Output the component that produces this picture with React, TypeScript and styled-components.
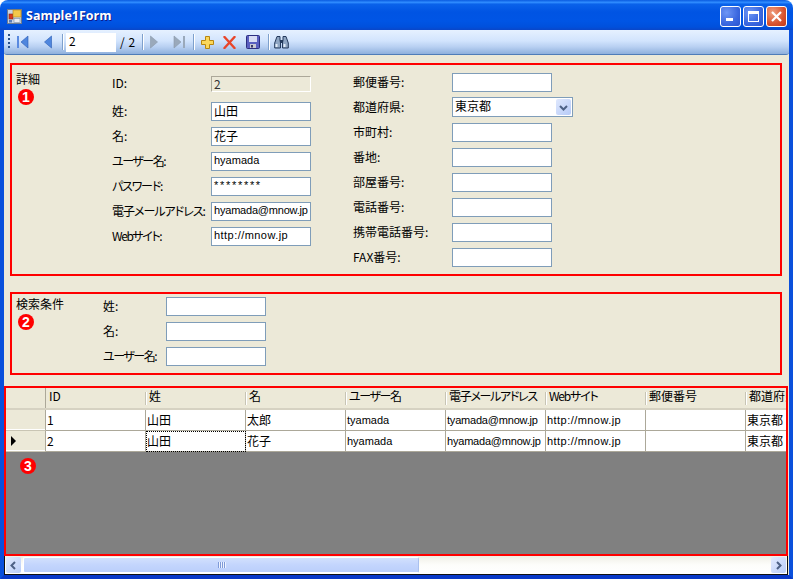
import React from 'react';
import styled, { createGlobalStyle, css } from 'styled-components';

const Global = createGlobalStyle`
  html, body { margin: 0; padding: 0; background: #fff; }
  #root { width: 793px; height: 579px; overflow: hidden; }
`;

const uiFont = `"Noto Sans CJK JP", "Liberation Sans", sans-serif`;

const latinText = css<{ $latin?: boolean; $track?: number }>`
  ${p => p.$latin ? `font-family: "Liberation Sans", sans-serif; font-size: 11px;` : ''}
  ${p => p.$track ? `letter-spacing: ${p.$track}px;` : ''}
`;

const Win = styled.div`
  width: 793px; height: 579px; display: flex; flex-direction: column;
  font-family: ${uiFont}; font-size: 12px; line-height: 14px; color: #000;
  font-feature-settings: "palt";
`;
const TitleBar = styled.div`
  height: 30px; flex: none; display: flex; align-items: center; padding: 2px 6px 0 7px;
  border-radius: 8px 8px 0 0; box-sizing: border-box;
  background: linear-gradient(180deg, #0a5be0 0%, #2f8cff 8%, #0a62ea 14%, #0054e3 40%, #0055e5 70%, #0050dc 90%, #0a46c8 100%);
`;
const TitleText = styled.div`
  font-family: "Open Sans", "Liberation Sans", sans-serif; font-weight: 700; font-size: 12.5px; color: #fff;
  text-shadow: 1px 1px 0 #0f1a89; flex: 1; margin-left: 4px;
`;
const CapBtn = styled.div<{ $close?: boolean }>`
  width: 21px; height: 21px; box-sizing: border-box; border: 1px solid #fff; border-radius: 3px;
  display: flex; align-items: center; justify-content: center; margin-left: 2px;
  background: ${p => p.$close
    ? 'radial-gradient(circle at 30% 30%, #f0a080, #d8532f 60%, #c23a18)'
    : 'radial-gradient(circle at 30% 30%, #6d96f5, #3a67df 60%, #2a54d0)'};
`;
const Frame = styled.div`
  flex: 1; min-height: 0; display: flex; box-sizing: border-box;
  border-left: 4px solid #0a50dc; border-right: 4px solid #0a50dc; border-bottom: 4px solid #0838c8;
`;
const Client = styled.div`
  flex: 1; min-width: 0; display: flex; flex-direction: column; background: #ece9d8;
`;
const Toolbar = styled.div`
  height: 25px; flex: none; box-sizing: border-box; display: flex; align-items: center;
  border-radius: 0 0 3px 3px; border-bottom: 1px solid #4f7cb8;
  background: linear-gradient(180deg, #e6f1ff 0%, #d2e4fd 45%, #b8d0f2 70%, #8fb0dc 100%);
`;
const Grip = styled.div`
  width: 2px; height: 16px; margin: 0 0 0 4px;
  background: repeating-linear-gradient(180deg, #27508c 0 2px, transparent 2px 4px);
`;
const Sep = styled.div<{ $l: number; $r: number }>`
  width: 1px; height: 16px; background: #7ea0cc; box-shadow: 1px 0 0 #fff;
  margin-left: ${p => p.$l}px; margin-right: ${p => p.$r}px;
`;
const IconSlot = styled.svg<{ $l: number }>`
  flex: none; margin-left: ${p => p.$l}px; display: block;
`;
const PageBox = styled.div`
  width: 50px; height: 19px; background: #fff; box-sizing: border-box; padding: 1px 0 0 3px; flex: none;
`;
const PageCount = styled.div`
  margin-left: 4px; width: 18px; white-space: nowrap; flex: none; letter-spacing: 0.5px;
`;
const Group = styled.section<{ $h: number; $mt: number }>`
  box-sizing: border-box; height: ${p => p.$h}px; margin: ${p => p.$mt}px 7px 0 6px;
  border: 2px solid #f00; display: flex; flex: none;
`;
const Heading = styled.div<{ $w: number; $pt: number }>`
  width: ${p => p.$w}px; box-sizing: border-box; padding: ${p => p.$pt}px 0 0 4px; flex: none;
  display: flex; flex-direction: column; align-items: flex-start; gap: 3px;
`;
const Badge = styled.div<{ $floating?: boolean }>`
  width: 16px; height: 16px; border-radius: 50%; background: #f00; color: #fff; margin-left: 2px;
  font-family: "Liberation Sans", sans-serif; font-weight: 700; font-size: 14px; line-height: 16px; text-align: center;
  ${p => p.$floating ? 'position: absolute; left: 12px; top: 70px;' : ''}
`;
const Fields = styled.div<{ $label: number; $pt: number; $ml?: number }>`
  display: grid; grid-template-columns: ${p => p.$label}px 100px; grid-auto-rows: min-content;
  row-gap: 6px; padding-top: ${p => p.$pt}px; margin-left: ${p => p.$ml ?? 0}px; align-items: center;
`;
const Label = styled.div<{ $up?: number; $track?: number }>`
  white-space: nowrap; height: 14px; margin-top: -${p => p.$up ?? 2}px;
  ${p => p.$track ? `letter-spacing: ${p.$track}px;` : ''}
`;
const Field = styled.div<{ $readonly?: boolean; $latin?: boolean; $track?: number }>`
  box-sizing: border-box; width: 100px; height: ${p => p.$readonly ? 16 : 19}px; padding: 0 0 0 2px;
  white-space: nowrap; background: ${p => p.$readonly ? '#ece9d8' : '#fff'};
  border: 1px solid #7f9db9; line-height: 15px;
  ${latinText}
  ${p => p.$readonly ? `
    border-color: #aca899 #fff #fff #aca899; color: #333; margin-bottom: 4px; line-height: 13px;
  ` : ''}
`;
const Combo = styled.div`
  box-sizing: border-box; width: 121px; height: 20px; margin-top: -1px; border: 1px solid #7f9db9; background: #fff;
  display: flex; align-items: center; justify-content: space-between; padding: 0 1px 0 2px;
`;
const ComboText = styled.span`
  margin-top: -3px;
`;
const ComboBtn = styled.div`
  width: 15px; height: 16px; border-radius: 2px; display: flex; align-items: center; justify-content: center;
  background: linear-gradient(135deg, #dfe8fd, #b6caf7);
`;
const GridWrap = styled.div`
  position: relative; box-sizing: border-box; height: 170px; margin: 11px 1px 0 0; flex: none;
  border: 2px solid #f00; background: #808080; overflow: hidden;
`;
const GridRow = styled.div<{ $header?: boolean }>`
  display: flex; height: ${p => p.$header ? 22 : 21}px; box-sizing: border-box;
  ${p => p.$header ? 'background: #ece9d8; border-bottom: 2px solid #d6d2c2;' : ''}
`;
const RowHead = styled.div<{ $header?: boolean }>`
  width: 40px; flex: none; box-sizing: border-box; background: #ece9d8; display: flex; align-items: center; padding-left: 5px;
  border-right: 1px solid #aca899;
  ${p => p.$header ? '' : 'position: relative; box-shadow: inset 0 -2px 0 -1px #fff; border-bottom: 1px solid #c9c5b4;'}
`;
const HeadCell = styled.div<{ $track?: number }>`
  width: 100px; flex: none; box-sizing: border-box; padding: 1px 0 0 3px; white-space: nowrap; position: relative;
  ${p => p.$track ? `letter-spacing: ${p.$track}px;` : ''}
  &::after { content: ''; position: absolute; right: 0; top: 4px; height: 13px; width: 1px; background: #c7c4b4; box-shadow: 1px 0 0 #fff; }
`;
const Cell = styled.div<{ $focus?: boolean; $latin?: boolean; $track?: number }>`
  width: 100px; flex: none; box-sizing: border-box; background: #fff; white-space: nowrap;
  border-right: 1px solid #aca899; border-bottom: 1px solid #aca899; padding: 3px 0 0 1px; overflow: hidden;
  ${latinText}
  ${p => p.$focus ? 'outline: 1px dotted #000; outline-offset: -1px;' : ''}
`;
const Scroller = styled.div`
  height: 19px; flex: none; box-sizing: border-box; margin-right: 1px; display: flex; align-items: stretch;
  border-left: 1px solid #111; border-bottom: 1px solid #111; border-right: 1px solid #111; padding: 1px;
  background: linear-gradient(180deg, #f0efe6 0%, #fdfdfb 50%, #fff 100%);
`;
const ScrollBtn = styled.div`
  width: 15px; flex: none; border-radius: 2px; display: flex; align-items: center; justify-content: center;
  background: linear-gradient(135deg, #e3ebfe, #b9cdf8);
`;
const Thumb = styled.div`
  width: 396px; margin-left: 2px; flex: none; display: flex; align-items: center; justify-content: center; gap: 1px;
  box-sizing: border-box; border: 1px solid #fff; border-right-color: #a9c0ee; border-radius: 2px;
  background: linear-gradient(180deg, #d2e0fd, #c3d5fd 50%, #bbcffb);
`;
const Notch = styled.div`
  width: 1px; height: 6px; background: #7e9ad8; box-shadow: 1px 0 0 #eef3ff;
`;
const Track = styled.div`flex: 1;`;

const NavFirst = ({ l }: { l: number }) => (
  <IconSlot $l={l} width="12" height="14" viewBox="0 0 12 14">
    <rect x="0" y="1" width="2" height="12" fill="#5a8ae0" />
    <path d="M11 1 L4 7 L11 13 Z" fill="#4f86de" stroke="#2a5cb4" strokeWidth="0.6" />
  </IconSlot>
);
const NavPrev = ({ l }: { l: number }) => (
  <IconSlot $l={l} width="8" height="14" viewBox="0 0 8 14">
    <path d="M7.5 1 L0.5 7 L7.5 13 Z" fill="#4f86de" stroke="#2a5cb4" strokeWidth="0.6" />
  </IconSlot>
);
const NavNext = ({ l }: { l: number }) => (
  <IconSlot $l={l} width="8" height="14" viewBox="0 0 8 14">
    <path d="M0.5 1 L7.5 7 L0.5 13 Z" fill="#9aa9bb" stroke="#8a98aa" strokeWidth="0.6" />
  </IconSlot>
);
const NavLast = ({ l }: { l: number }) => (
  <IconSlot $l={l} width="12" height="14" viewBox="0 0 12 14">
    <path d="M1 1 L8 7 L1 13 Z" fill="#9aa9bb" stroke="#8a98aa" strokeWidth="0.6" />
    <rect x="10" y="1" width="2" height="12" fill="#9aa9bb" />
  </IconSlot>
);
const PlusIcon = ({ l }: { l: number }) => (
  <IconSlot $l={l} width="13" height="13" viewBox="0 0 13 13">
    <path d="M4.5 0.5 H8.5 V4.5 H12.5 V8.5 H8.5 V12.5 H4.5 V8.5 H0.5 V4.5 H4.5 Z" fill="#fbd75a" stroke="#b8860f" />
  </IconSlot>
);
const CrossIcon = ({ l }: { l: number }) => (
  <IconSlot $l={l} width="13" height="13" viewBox="0 0 13 13">
    <path d="M1.5 1 L11.5 12 M11.5 1 L1.5 12" stroke="#e8452a" strokeWidth="2.4" strokeLinecap="round" />
  </IconSlot>
);
const SaveIcon = ({ l }: { l: number }) => (
  <IconSlot $l={l} width="14" height="14" viewBox="0 0 14 14">
    <rect x="0.5" y="0.5" width="13" height="13" rx="1" fill="#5a5fc0" stroke="#2c2e80" />
    <rect x="3" y="1" width="8" height="6" fill="#d8dcf4" />
    <rect x="4" y="9" width="6" height="4" fill="#c8c8d4" />
    <rect x="5" y="10" width="2" height="2.5" fill="#3a3a6a" />
  </IconSlot>
);
const BinoIcon = ({ l }: { l: number }) => (
  <IconSlot $l={l} width="15" height="14" viewBox="0 0 15 14">
    <path d="M3 1.5 H6 V5 L6.5 8 V13 H0.7 V8 Z" fill="#8fa6c4" stroke="#243a5c" strokeWidth="1" />
    <path d="M9 1.5 H12 L14.3 8 V13 H8.5 V8 L9 5 Z" fill="#8fa6c4" stroke="#243a5c" strokeWidth="1" />
    <rect x="6" y="5" width="3" height="3" fill="#243a5c" />
    <rect x="1.5" y="9" width="2" height="3" fill="#e4edf8" />
    <rect x="9.5" y="9" width="2" height="3" fill="#e4edf8" />
  </IconSlot>
);
const AppIcon = () => (
  <svg width="15" height="15" viewBox="0 0 15 15" style={{ flex: 'none' }}>
    <rect x="0.5" y="0.5" width="14" height="14" fill="#c8d4e4" stroke="#6c7a90" />
    <rect x="2" y="5" width="4" height="5" fill="#d83a20" stroke="#8c2010" strokeWidth="0.6" />
    <rect x="6" y="1" width="8" height="7" fill="#f4c84a" stroke="#b08420" strokeWidth="0.6" />
    <rect x="2" y="11" width="3" height="2.5" fill="#5a7cb8" />
    <rect x="7" y="9.5" width="6" height="4" fill="#e8ecf4" stroke="#7c8ca4" strokeWidth="0.6" />
  </svg>
);
const Chevron = ({ dir }: { dir: 'left' | 'right' | 'down' }) => {
  const d = dir === 'left' ? 'M6 1 L2.5 4.5 L6 8' : dir === 'right' ? 'M3 1 L6.5 4.5 L3 8' : 'M1 3 L4.5 6.5 L8 3';
  return (
    <svg width="9" height="9" viewBox="0 0 9 9">
      <path d={d} fill="none" stroke="#4d6185" strokeWidth="2" />
    </svg>
  );
};
const Triangle = () => (
  <svg width="5" height="10" viewBox="0 0 5 10"><path d="M0 0 L5 5 L0 10 Z" fill="#000" /></svg>
);

type LeftField = { label: string; value: string; labelTrack?: number; latin?: boolean; track?: number };
const leftFields: LeftField[] = [
  { label: '姓:', value: '山田' },
  { label: '名:', value: '花子' },
  { label: 'ユーザー名:', value: 'hyamada', labelTrack: -1.5, latin: true },
  { label: 'パスワード:', value: '********', labelTrack: -1.2, latin: true, track: 1.7 },
  { label: '電子メールアドレス:', value: 'hyamada@mnow.jp', labelTrack: -1, latin: true, track: -0.2 },
  { label: 'Webサイト:', value: 'http://mnow.jp', labelTrack: -1.4, latin: true, track: 0.45 },
];
const rightAfterCombo = ['市町村:', '番地:', '部屋番号:', '電話番号:', '携帯電話番号:', 'FAX番号:'];
const columns: { name: string; track?: number }[] = [
  { name: 'ID' }, { name: '姓' }, { name: '名' }, { name: 'ユーザー名', track: -1.4 },
  { name: '電子メールアドレス', track: -1.3 }, { name: 'Webサイト', track: -1.2 },
  { name: '郵便番号' }, { name: '都道府県' },
];
const rows = [
  ['1', '山田', '太郎', 'tyamada', 'tyamada@mnow.jp', 'http://mnow.jp', '', '東京都'],
  ['2', '山田', '花子', 'hyamada', 'hyamada@mnow.jp', 'http://mnow.jp', '', '東京都'],
];
const cellTrack = (v: string) => (v.startsWith('http') ? 0.45 : v.includes('@') ? -0.2 : 0);
const isLatinCell = (v: string) => /^[a-z]/.test(v);

export default function App() {
  return (
    <Win>
      <Global />
      <TitleBar>
        <AppIcon />
        <TitleText>Sample1Form</TitleText>
        <CapBtn>
          <svg width="11" height="11" viewBox="0 0 11 11"><rect x="1" y="7" width="7" height="3" fill="#fff" /></svg>
        </CapBtn>
        <CapBtn>
          <svg width="13" height="13" viewBox="0 0 13 13"><rect x="1.5" y="1.5" width="10" height="10" fill="none" stroke="#fff" /><rect x="1" y="1" width="11" height="3" fill="#fff" /></svg>
        </CapBtn>
        <CapBtn $close>
          <svg width="13" height="13" viewBox="0 0 13 13"><path d="M2 2 L11 11 M11 2 L2 11" stroke="#fff" strokeWidth="2.2" /></svg>
        </CapBtn>
      </TitleBar>
      <Frame>
        <Client>
          <Toolbar>
            <Grip />
            <NavFirst l={7} />
            <NavPrev l={15} />
            <Sep $l={10} $r={3} />
            <PageBox>2</PageBox>
            <PageCount>/ 2</PageCount>
            <Sep $l={4} $r={0} />
            <NavNext l={7} />
            <NavLast l={15} />
            <Sep $l={8} $r={0} />
            <PlusIcon l={7} />
            <CrossIcon l={9} />
            <SaveIcon l={10} />
            <Sep $l={8} $r={0} />
            <BinoIcon l={5} />
          </Toolbar>
          <Group $h={213} $mt={8}>
            <Heading $w={100} $pt={7}>
              詳細
              <Badge>1</Badge>
            </Heading>
            <Fields $label={99} $pt={11}>
              <Label $up={6}>ID:</Label>
              <Field $readonly>2</Field>
              {leftFields.map(f => (
                <React.Fragment key={f.label}>
                  <Label $track={f.labelTrack}>{f.label}</Label>
                  <Field $latin={f.latin} $track={f.track}>{f.value}</Field>
                </React.Fragment>
              ))}
            </Fields>
            <Fields $label={99} $pt={8} $ml={42}>
              <Label>郵便番号:</Label>
              <Field />
              <Label>都道府県:</Label>
              <Combo>
                <ComboText>東京都</ComboText>
                <ComboBtn><Chevron dir="down" /></ComboBtn>
              </Combo>
              {rightAfterCombo.map(l => (
                <React.Fragment key={l}>
                  <Label>{l}</Label>
                  <Field />
                </React.Fragment>
              ))}
            </Fields>
          </Group>
          <Group $h={83} $mt={16}>
            <Heading $w={91} $pt={3}>
              検索条件
              <Badge>2</Badge>
            </Heading>
            <Fields $label={63} $pt={3}>
              <Label>姓:</Label><Field />
              <Label>名:</Label><Field />
              <Label $track={-1.5}>ユーザー名:</Label><Field />
            </Fields>
          </Group>
          <GridWrap>
            <GridRow $header>
              <RowHead $header />
              {columns.map(c => <HeadCell key={c.name} $track={c.track}>{c.name}</HeadCell>)}
            </GridRow>
            {rows.map((r, ri) => (
              <GridRow key={ri}>
                <RowHead>{ri === 1 && <Triangle />}</RowHead>
                {r.map((c, ci) => (
                  <Cell key={ci} $focus={ri === 1 && ci === 1} $latin={isLatinCell(c)} $track={cellTrack(c)}>{c}</Cell>
                ))}
              </GridRow>
            ))}
            <Badge $floating>3</Badge>
          </GridWrap>
          <Scroller>
            <ScrollBtn><Chevron dir="left" /></ScrollBtn>
            <Thumb><Notch /><Notch /><Notch /><Notch /></Thumb>
            <Track />
            <ScrollBtn><Chevron dir="right" /></ScrollBtn>
          </Scroller>
        </Client>
      </Frame>
    </Win>
  );
}
